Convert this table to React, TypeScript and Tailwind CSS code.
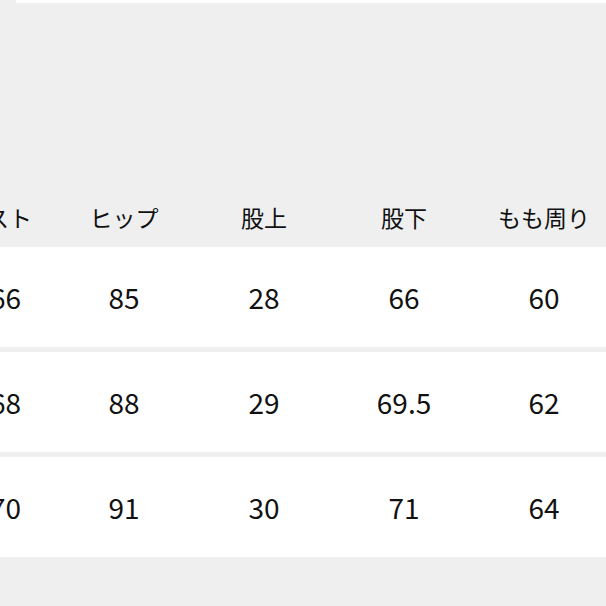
const headers = ['ウエスト', 'ヒップ', '股上', '股下', 'もも周り']
const rows = [
  ['66', '85', '28', '66', '60'],
  ['68', '88', '29', '69.5', '62'],
  ['70', '91', '30', '71', '64'],
]

export default function App() {
  return (
    <div
      className="w-[606px] h-[606px] overflow-hidden bg-[#efefef] text-[#111]"
      style={{ fontFamily: '"Noto Sans CJK JP", "Noto Sans", sans-serif' }}
    >
      <div className="h-[3px] ml-[16px] bg-white" />
      <div className="h-[184px]" />
      <div className="flex h-[60px] items-center ml-[-86px]">
        {headers.map((h, j) => (
          <div
            key={h}
            className={
              j === 0
                ? 'w-[140px] shrink-0 text-right pr-[22px] text-[23px] leading-none'
                : 'w-[140px] shrink-0 text-center text-[23px] leading-none'
            }
          >
            {h}
          </div>
        ))}
      </div>
      <div className="flex flex-col gap-[5px]">
        {rows.map((r, i) => (
          <div key={i} className="h-[100px] bg-white flex items-center ml-[-86px]">
            {r.map((v, j) => (
              <div
                key={j}
                className={
                  j === 0
                    ? 'w-[140px] shrink-0 text-right pr-[33px] text-[28px] leading-none'
                    : 'w-[140px] shrink-0 text-center text-[28px] leading-none'
                }
              >
                {v}
              </div>
            ))}
          </div>
        ))}
      </div>
    </div>
  )
}
